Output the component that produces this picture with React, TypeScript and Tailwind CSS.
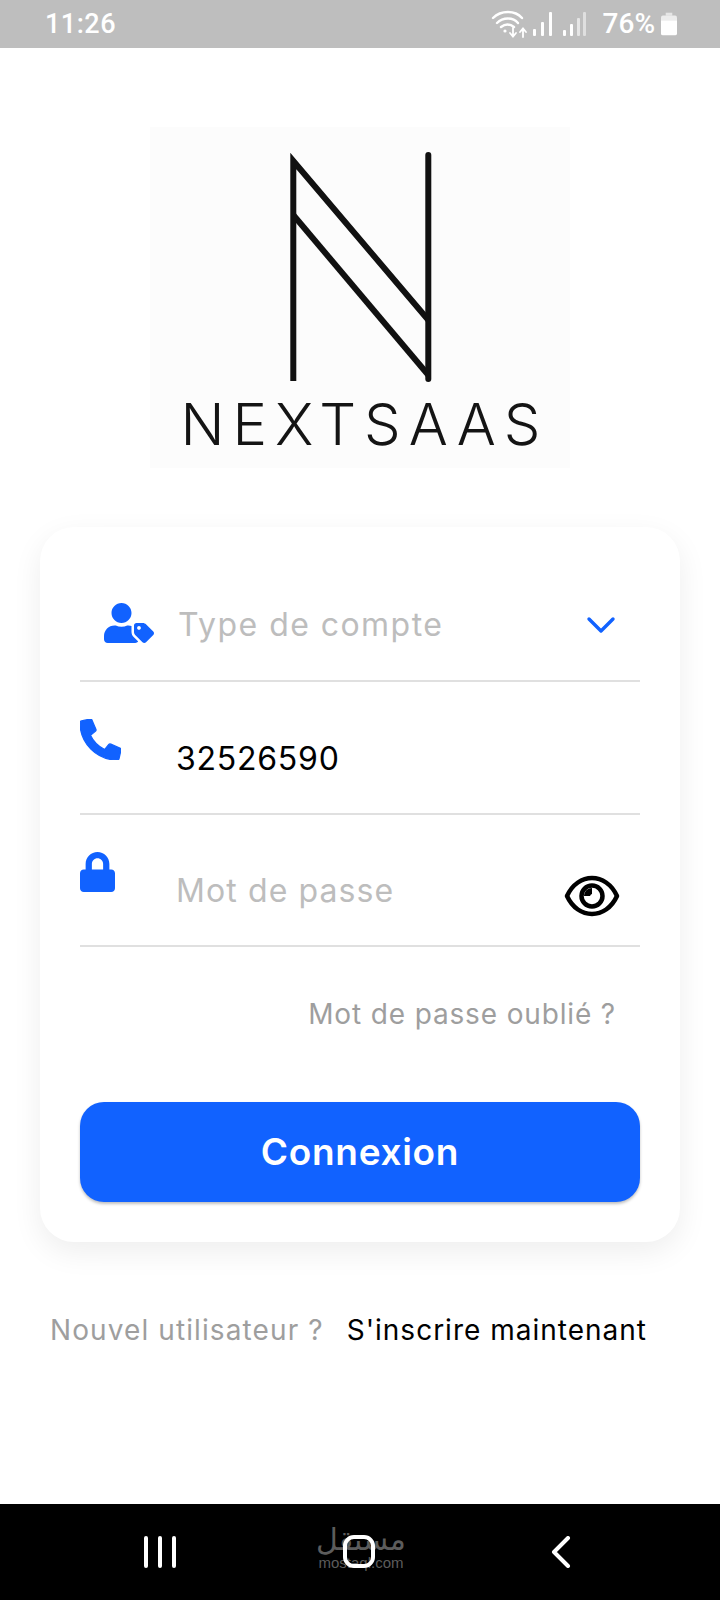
import { FaUserTag, FaLock, FaPhoneAlt } from "react-icons/fa";
import { ChevronDown } from "lucide-react";

function StatusBar() {
  return (
    <div className="h-12 bg-[#bebebe] flex items-center justify-between pl-[45px] pr-[43px] text-white font-['Roboto',sans-serif]">
      <span className="text-[27px] font-medium tracking-[0.5px] leading-none">11:26</span>
      <div className="flex items-center">
        {/* wifi with arrows */}
        <svg width="44" height="30" viewBox="0 0 44 30" fill="none" stroke="white" strokeLinecap="round">
          <path d="M2 9 C10 1 24 1 31 9" strokeWidth="2.4" />
          <path d="M6 14 C12 8 22 8 27 14" strokeWidth="2.4" />
          <path d="M10 18 C14 15 19 15 23 18" strokeWidth="2.4" />
          <circle cx="14" cy="22" r="1.6" fill="white" stroke="none" />
          <path d="M22 19 V27 M19 24 L22 27.5 L25 24" strokeWidth="1.8" />
          <path d="M32 28 V20 M29 23 L32 19.5 L35 23" strokeWidth="1.8" />
        </svg>
        <svg width="28" height="30" viewBox="0 0 28 30" fill="white" className="-ml-[5px]">
          <rect x="3" y="20" width="3" height="7" rx="1" />
          <rect x="11" y="13" width="3" height="14" rx="1" />
          <rect x="19" y="3" width="3" height="24" rx="1" />
        </svg>
        <svg width="28" height="30" viewBox="0 0 28 30" fill="white" className="ml-[3px]">
          <rect x="2" y="21" width="3" height="6" rx="1" />
          <rect x="9" y="15" width="3" height="12" rx="1" />
          <rect x="16" y="9" width="3" height="18" rx="1" opacity="0.6" />
          <rect x="22" y="3" width="3" height="24" rx="1" opacity="0.5" />
        </svg>
        <span className="text-[28px] font-medium leading-none ml-[14px]">76%</span>
        <svg width="16" height="24" viewBox="0 0 17 24" fill="white" className="ml-[6px]">
          <path d="M5 0 H12 V3 H5 Z" opacity="0.6" />
          <path d="M2 3 H15 A2 2 0 0 1 17 5 V8 H0 V5 A2 2 0 0 1 2 3 Z" opacity="0.7" />
          <path d="M0 8 H17 V22 A2 2 0 0 1 15 24 H2 A2 2 0 0 1 0 22 Z" />
        </svg>
      </div>
    </div>
  );
}

function Logo() {
  return (
    <div className="w-[420px] h-[341px] mx-auto mt-[79px] bg-[#fcfcfc] flex flex-col items-center pt-[23px]">
      <svg width="146" height="232" viewBox="0 0 146 232" fill="none" stroke="#111" strokeWidth="6" className="ml-[2px] overflow-visible">
        <path d="M5.3 231 V11 L140.3 170" />
        <path d="M5.3 65 L140.3 225" />
        <path d="M140.3 5 V229" strokeLinecap="round" />
      </svg>
      <div className="text-[58px] font-light leading-none tracking-[8px] ml-[9px] text-[#141414] mt-[13px] font-['Inter',sans-serif]">NEXTSAAS</div>
    </div>
  );
}

function EyeIcon() {
  return (
    <svg width="56" height="44" viewBox="0 0 56 44" fill="none" stroke="black" strokeWidth="4.5" className="absolute right-[20px] top-[59px]">
      <path d="M3 22 C14 -2 42 -2 53 22 C42 46 14 46 3 22 Z" strokeLinejoin="round" />
      <circle cx="28" cy="22" r="10.5" />
      <path d="M28 14 A8 8 0 0 0 20 22 L28 22 Z" fill="black" stroke="none" />
      <circle cx="30" cy="24" r="4.5" fill="white" stroke="none" />
    </svg>
  );
}

export default function App() {
  return (
    <div className="relative w-[720px] h-[1600px] bg-white flex flex-col font-['Inter',sans-serif] overflow-hidden">
      <StatusBar />
      <Logo />

      {/* card */}
      <div className="mx-[40px] mt-[59px] h-[715px] rounded-[34px] bg-white shadow-[0_10px_30px_rgba(0,0,0,0.07)] px-[40px] flex flex-col">
        <div className="h-[155px] border-b-2 border-[#e0e0e0] flex items-start pt-[76px] relative shrink-0">
          <FaUserTag className="text-[#1162ff] ml-[24px] w-[50px] h-[40px]" />
          <span className="ml-[24px] text-[32px] tracking-[1.45px] leading-[44px] text-[#bdbdbd]">Type de compte</span>
          <ChevronDown className="absolute right-[15px] top-[74px] text-[#1162ff]" size={48} strokeWidth={1.7} />
        </div>

        <div className="h-[133px] border-b-2 border-[#e0e0e0] flex items-start pt-[37px] shrink-0">
          <FaPhoneAlt className="text-[#1162ff] w-[41px] h-[41px]" stroke="currentColor" strokeWidth={16} strokeLinejoin="round" />
          <span className="ml-[55px] mt-[18px] text-[32px] leading-[44px] tracking-[0.75px] text-black">32526590</span>
        </div>

        <div className="h-[132px] border-b-2 border-[#e0e0e0] flex items-start pt-[37px] relative shrink-0">
          <FaLock className="text-[#1162ff] w-[35px] h-[40px]" />
          <span className="ml-[61px] mt-[17px] text-[32px] tracking-[1.1px] leading-[44px] text-[#bdbdbd]">Mot de passe</span>
          <EyeIcon />
        </div>

        <div className="mt-[46px] pr-[24px] text-right text-[28px] tracking-[0.85px] leading-[42px] text-[#9e9e9e]">Mot de passe oublié ?</div>

        <button className="mt-[67px] h-[100px] rounded-[24px] bg-[#1162ff] shadow-[0_2px_3px_rgba(0,0,0,0.25)] text-white text-[37px] tracking-[0.7px] font-semibold">
          Connexion
        </button>
      </div>

      <div className="mt-[66px] pl-[50px] flex text-[28px] leading-[44px]">
        <span className="text-[#9e9e9e] tracking-[1.1px]">Nouvel utilisateur ?</span>
        <span className="ml-[23px] tracking-[1px] text-black">S'inscrire maintenant</span>
      </div>

      {/* nav bar */}
      <div className="mt-auto h-[96px] bg-black relative flex items-start shrink-0">
        <div className="absolute left-[316px] top-[22px] w-[90px] flex flex-col items-center text-[#5c5c5c] leading-none">
          <span className="text-[30px] leading-[28px] font-['DejaVu_Sans',sans-serif]">مستقل</span>
          <span className="text-[15px] font-['Liberation_Sans',sans-serif] mt-[1px]">mostaql.com</span>
        </div>
        <div className="relative ml-[144px] mt-[31px] flex items-center">
          <div className="flex gap-[10px]">
            <div className="w-[4px] h-[32px] rounded-full bg-white" />
            <div className="w-[4px] h-[32px] rounded-full bg-white" />
            <div className="w-[4px] h-[32px] rounded-full bg-white" />
          </div>
          <div className="ml-[167px] w-[32px] h-[33px] rounded-[11px] border-[4px] border-white" />
          <svg width="20" height="32" viewBox="0 0 20 32" fill="none" stroke="white" strokeWidth="4" strokeLinecap="round" strokeLinejoin="round" className="ml-[176px]">
            <path d="M17 2 L3 16 L17 30" />
          </svg>
        </div>
      </div>
    </div>
  );
}
